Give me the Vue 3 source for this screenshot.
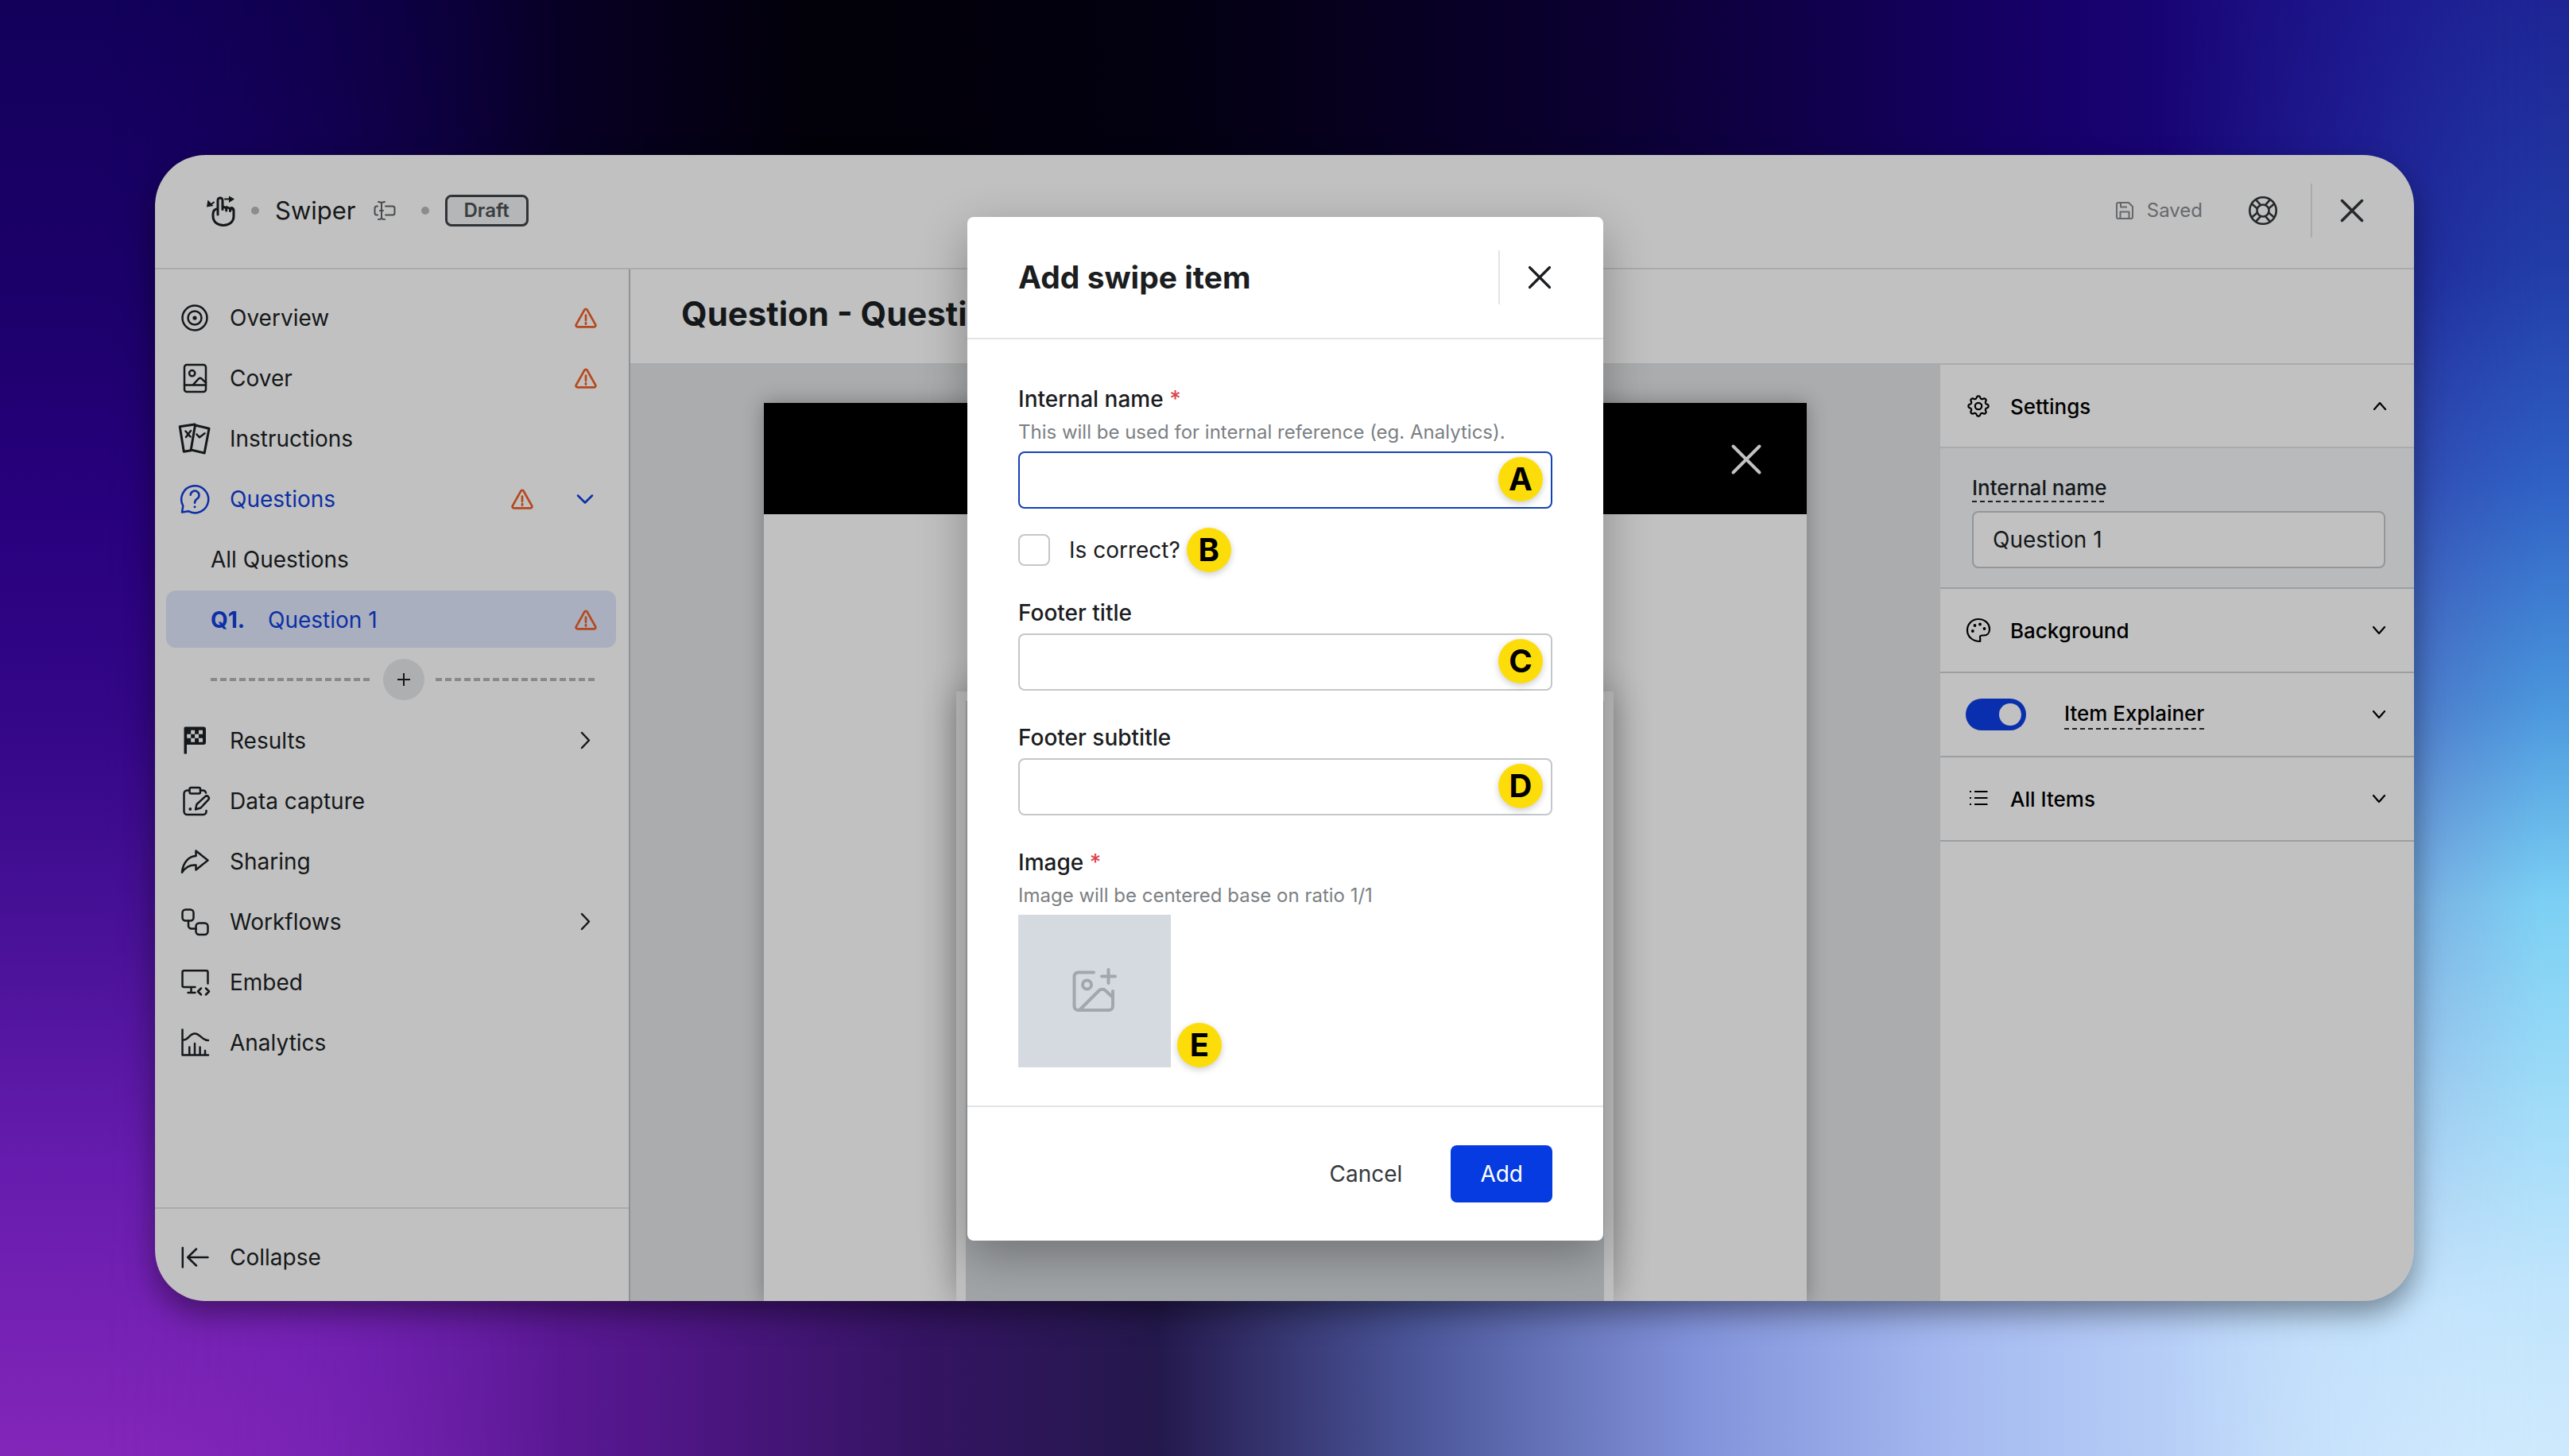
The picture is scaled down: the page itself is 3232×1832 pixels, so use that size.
<script setup>
import { ref } from 'vue'

const mainNav = [
  { id: 'overview', label: 'Overview', warn: true },
  { id: 'cover', label: 'Cover', warn: true },
  { id: 'instructions', label: 'Instructions' },
  { id: 'questions', label: 'Questions', warn: true, chevron: 'down', active: true }
]
const moreNav = [
  { id: 'results', label: 'Results', chevron: 'right' },
  { id: 'data', label: 'Data capture' },
  { id: 'sharing', label: 'Sharing' },
  { id: 'workflows', label: 'Workflows', chevron: 'right' },
  { id: 'embed', label: 'Embed' },
  { id: 'analytics', label: 'Analytics' }
]

const icons = {
  overview: '<circle cx="20" cy="20" r="15.5"/><circle cx="20" cy="20" r="8.5"/><circle cx="20" cy="20" r="2.6" fill="currentColor" stroke="none"/>',
  cover: '<rect x="7" y="3" width="27" height="34" rx="3"/><path d="M7 28.5h27M18 28l6.600-7.200a3 3 0 0 1 4.400 0l5 4.700"/><circle cx="16.700" cy="13.700" r="3.600"/>',
  instructions: '<path stroke-width="3" d="M20.500 3 38 7.200 32.200 38 15.200 34Z"/><path stroke-width="3" d="M20 1.900 1.200 4.800 6.300 36.200l9-1.400"/><path d="m8.500 10.500 6 7m.5-7.500-6 8M22.500 14.500l3.500 3.800 6.500-5"/>',
  questions: '<path d="M4 36.500 5.300 28.500A17 17 0 1 1 12 35.200Z"/><path d="M14.700 14.800a5.400 5.400 0 1 1 8.400 4.700c-2.100 1.400-3.100 2.600-3.100 5.200"/><circle cx="20" cy="29.700" r="1.500" fill="currentColor" stroke="none"/>',
  results: '<path fill="currentColor" stroke="none" fill-rule="evenodd" d="M6.500 4a1.500 1.500 0 0 1 1.500-1.500h23a3 3 0 0 1 3 3V22a3 3 0 0 1-3 3H10v11.500H6.500ZM15.200 6.700h4.900v5h-4.900ZM25 6.700h5v5h-5ZM10.200 11.700h5v5h-5ZM20.100 11.700H25v5h-4.900ZM15.200 16.700h4.900v5h-4.900ZM25 16.700h5v5h-5Z"/>',
  data: '<path d="M13 6.500H10.500a4 4 0 0 0-4 4V33a4 4 0 0 0 4 4H31a3.500 3.500 0 0 0 3.500-3.500V32M27 6.500h3a4 4 0 0 1 4 3"/><rect x="13.500" y="3" width="13.500" height="7.500" rx="2"/><path d="M21 30.500l1.500-6.500L33 14.300a2.800 2.800 0 0 1 4 4L27.500 28.500Z"/><circle cx="14.300" cy="30" r="1.900" fill="currentColor" stroke="none"/>',
  sharing: '<path d="M21.500 6.500 36.500 18.500 21.500 30.500V24.500C13 23.800 8 27.500 4 33.700 5 22 12 13.500 21.500 13Z"/>',
  workflows: '<rect x="4.500" y="4.500" width="14" height="14" rx="4"/><rect x="21.500" y="21.500" width="15" height="14.500" rx="4"/><path d="M12 18.500v6a4 4 0 0 0 4 4h5.500"/>',
  embed: '<path d="M20.500 26H6.500a2 2 0 0 1-2-2V7.300a2 2 0 0 1 2-2h28a2 2 0 0 1 2 2v14.200M15.500 26v6.500M11.500 33h9M28 27.500l-4 4 4 4M34 27.500l4 4-4 4"/>',
  analytics: '<path d="M4.500 3.500V35.500H37M4.500 16.500C12 17.500 13 8.500 20 8.500s8.500 8.500 17 8.500M13.300 35V25.500M20 35V21M26.600 35V25.500M33 35v-5"/>'
}

const gearPath = (() => {
  let d = ''
  for (let i = 0; i <= 128; i++) {
    const a = (i / 128) * Math.PI * 2
    const r = 11.200 + 1.500 * Math.tanh(1.600 * Math.cos(8 * a))
    d += `${i ? 'L' : 'M'}${(16 + r * Math.sin(a)).toFixed(2)} ${(16 - r * Math.cos(a)).toFixed(2)}`
  }
  return d + 'Z'
})()

const questionName = ref('Question 1')
const explainer = ref(true)
const itemName = ref('')
const isCorrect = ref(false)
const footerTitle = ref('')
const footerSubtitle = ref('')
</script>

<template>
  <div class="stage">
    <div class="glow top"></div>
    <div class="glow left"></div>
    <div class="glow right"></div>
    <div class="window">
      <header class="topbar">
        <svg class="logo" viewBox="0 0 36 40" fill="none" stroke="currentColor" stroke-width="3" stroke-linecap="round" stroke-linejoin="round">
          <path d="M14 25V7a3 3 0 0 1 6 0v11.500M14 17.500c-4 .5-6 3-6 7V27c0 7 5.500 11.500 13 11.500S34 34 34 27v-7.500c0-1.800-1.500-3-3-3M20 14.500l4.700 2.500v3M25 15.500l4.500 2v3M29.500 17l4 1.500" />
          <path stroke-width="2" d="M23 5.500h6M9 9.500 5 12.500" />
          <path fill="currentColor" stroke="none" d="M28 1.500 35 5.500l-7 4.500ZM1.500 6.500 8.500 14 0 15.500Z" />
        </svg>
        <span class="dot"></span>
        <span class="project">Swiper</span>
        <button class="icon-btn rename" aria-label="Rename">
          <svg viewBox="0 0 28 24" width="28" height="24" fill="none" stroke="currentColor" stroke-width="2" stroke-linecap="round" stroke-linejoin="round">
            <path d="M6 1c2.500 0 4 1 4 2.500v17c0 1.500-1.500 2.500-4 2.500M14 1c-2.500 0-4 1-4 2.500M14 23c-2.500 0-4-1-4-2.500M5 6.500H4a2.500 2.500 0 0 0-2.500 2.500v6A2.500 2.500 0 0 0 4 17.500h1M15 6.500h9A2.500 2.500 0 0 1 26.500 9v6a2.500 2.500 0 0 1-2.500 2.500h-9M8 12h4" />
          </svg>
        </button>
        <span class="dot"></span>
        <span class="draft">Draft</span>
        <div class="top-actions">
          <span class="saved">
            <svg viewBox="0 0 24 24" width="24" height="24" fill="none" stroke="currentColor" stroke-width="2" stroke-linejoin="round">
              <path d="M2 4a2 2 0 0 1 2-2h13l5 5v13a2 2 0 0 1-2 2H4a2 2 0 0 1-2-2ZM6.500 22v-8.500h11V22M7 2v5.500h8" />
            </svg>
            Saved
          </span>
          <button class="icon-btn" aria-label="Help">
            <svg viewBox="0 0 40 40" width="40" height="40" fill="none" stroke="currentColor" stroke-width="2.600">
              <circle cx="20" cy="20" r="16.700" /><circle cx="20" cy="20" r="7.500" />
              <path d="M12.800 17.200 5.800 11.500M17 12.900 11 6.200M27.200 17.200l7-5.700M23 12.900l6-6.700M12.800 22.800l-7 5.700M17 27.100l-6 6.700M27.200 22.800l7 5.700M23 27.100l6 6.700" />
            </svg>
          </button>
          <span class="divider"></span>
          <button class="icon-btn" aria-label="Close editor">
            <svg viewBox="0 0 32 32" width="32" height="32" fill="none" stroke="currentColor" stroke-width="3.500" stroke-linecap="round"><path d="M3.500 3.500l25 25M28.500 3.500l-25 25" /></svg>
          </button>
        </div>
      </header>

      <div class="columns">
        <nav class="sidebar">
          <div class="nav-list">
            <a v-for="n in mainNav" :key="n.id" href="#" class="nav-item" :class="{ active: n.active }">
              <svg class="nav-icon" viewBox="0 0 40 40" v-html="icons[n.id]"></svg>
              <span class="nav-label">{{ n.label }}</span>
              <svg v-if="n.warn" class="warn" viewBox="0 0 28 28"><path d="M12.300 3.800a2 2 0 0 1 3.400 0l10.400 18.600a2 2 0 0 1-1.700 3H3.600a2 2 0 0 1-1.700-3ZM14 10.500v6.500M14 20v1.800" /></svg>
              <svg v-if="n.chevron" class="chev" viewBox="0 0 28 28"><path d="m4 9.500 9 9 9-9" /></svg>
            </a>
            <a href="#" class="nav-item sub">All Questions</a>
            <a href="#" class="nav-item sub selected">
              <b class="number">Q1.</b>
              <span class="nav-label">Question 1</span>
              <svg class="warn" viewBox="0 0 28 28"><path d="M12.300 3.800a2 2 0 0 1 3.400 0l10.400 18.600a2 2 0 0 1-1.700 3H3.600a2 2 0 0 1-1.700-3ZM14 10.500v6.500M14 20v1.800" /></svg>
            </a>
            <div class="add-row">
              <span class="dashes"></span>
              <button class="add-question" aria-label="Add question">
                <svg viewBox="0 0 20 20" width="20" height="20" fill="none" stroke="currentColor" stroke-width="2"><path d="M10 2v16M2 10h16" /></svg>
              </button>
              <span class="dashes"></span>
            </div>
            <a v-for="n in moreNav" :key="n.id" href="#" class="nav-item">
              <svg class="nav-icon" viewBox="0 0 40 40" v-html="icons[n.id]"></svg>
              <span class="nav-label">{{ n.label }}</span>
              <svg v-if="n.chevron" class="chev" viewBox="0 0 28 28"><path d="m9 4 9 9.500L9 23" /></svg>
            </a>
          </div>
          <div class="nav-footer">
            <button class="nav-item">
              <svg class="nav-icon" viewBox="0 0 40 40"><path d="M4.800 8v24.500M36.500 20H11.500M22 9.500 11.200 20 22 30.500" /></svg>
              <span class="nav-label">Collapse</span>
            </button>
          </div>
        </nav>

        <main class="main">
          <h1 class="page-title">Question - Question 1</h1>
          <div class="work">
            <section class="canvas">
              <div class="preview">
                <div class="preview-bar">
                  <svg viewBox="0 0 40 40" width="40" height="40" fill="none" stroke="currentColor" stroke-width="4" stroke-linecap="round"><path d="M3.500 3.500l33 33M36.500 3.500l-33 33" /></svg>
                </div>
                <div class="card"><div class="card-image"></div></div>
              </div>
            </section>

            <aside class="panel">
              <button class="acc-head first">
                <svg class="acc-icon" viewBox="0 0 32 32"><path :d="gearPath" /><circle cx="16" cy="16" r="4.200" /></svg>
                <span class="acc-label">Settings</span>
                <svg class="acc-chev" viewBox="0 0 20 20"><path d="m4 14 7-8 7 8" /></svg>
              </button>
              <div class="acc-body">
                <label for="question-name" class="dashed">Internal name</label>
                <input id="question-name" v-model="questionName" class="field" type="text" />
              </div>
              <button class="acc-head">
                <svg class="acc-icon" viewBox="0 0 32 32">
                  <path d="M18.200 30c-9.700 0-16.200-6-16.200-14A13.900 13.900 0 0 1 16 2c8 0 14 5.500 14 12.700 0 5-3.200 7.800-7 7.800h-2.500c-2.500 0-3 1.500-2.300 3.500Z" />
                  <g fill="currentColor" stroke="none"><circle cx="8.800" cy="17" r="1.900" /><circle cx="11.500" cy="10" r="1.900" /><circle cx="18" cy="8.500" r="1.900" /><circle cx="23.500" cy="14" r="1.900" /></g>
                </svg>
                <span class="acc-label">Background</span>
                <svg class="acc-chev" viewBox="0 0 20 20"><path d="m3 6 7 8 7-8" /></svg>
              </button>
              <div class="acc-head">
                <input id="explainer" v-model="explainer" class="toggle" type="checkbox" role="switch" />
                <label for="explainer" class="dashed explainer">Item Explainer</label>
                <svg class="acc-chev" viewBox="0 0 20 20"><path d="m3 6 7 8 7-8" /></svg>
              </div>
              <button class="acc-head">
                <svg class="acc-icon" viewBox="0 0 32 32"><path d="M11 7h16.500M11 15h16.500M11 23h16.500M5 7h2M5 15h2M5 23h2" /></svg>
                <span class="acc-label">All Items</span>
                <svg class="acc-chev" viewBox="0 0 20 20"><path d="m3 6 7 8 7-8" /></svg>
              </button>
            </aside>
          </div>
        </main>
      </div>

      <div class="overlay">
        <form class="modal" role="dialog" aria-labelledby="modal-title" @submit.prevent>
          <div class="modal-head">
            <h2 id="modal-title">Add swipe item</h2>
            <span class="divider light"></span>
            <button type="button" class="icon-btn" aria-label="Close dialog">
              <svg viewBox="0 0 32 32" width="32" height="32" fill="none" stroke="currentColor" stroke-width="3.200" stroke-linecap="round"><path d="M3.500 3.500l25 25M28.500 3.500l-25 25" /></svg>
            </button>
          </div>
          <div class="modal-body">
            <div class="group">
              <label for="item-name">Internal name <span class="req">*</span></label>
              <p class="hint">This will be used for internal reference (eg. Analytics).</p>
              <div class="control">
                <input id="item-name" v-model="itemName" class="field focus" type="text" />
                <span class="badge">A</span>
              </div>
            </div>
            <div class="check-row">
              <input id="is-correct" v-model="isCorrect" type="checkbox" class="check" />
              <label for="is-correct">Is correct?</label>
              <span class="badge inline">B</span>
            </div>
            <div class="group">
              <label for="footer-title">Footer title</label>
              <div class="control">
                <input id="footer-title" v-model="footerTitle" class="field" type="text" />
                <span class="badge">C</span>
              </div>
            </div>
            <div class="group">
              <label for="footer-subtitle">Footer subtitle</label>
              <div class="control">
                <input id="footer-subtitle" v-model="footerSubtitle" class="field" type="text" />
                <span class="badge">D</span>
              </div>
            </div>
            <div class="group">
              <span class="legend">Image <span class="req">*</span></span>
              <p class="hint">Image will be centered base on ratio 1/1</p>
              <div class="image-row">
                <button type="button" class="image-picker" aria-label="Choose image">
                  <svg viewBox="0 0 60 60" width="60" height="60" fill="none" stroke="currentColor" stroke-width="4" stroke-linecap="round" stroke-linejoin="round">
                    <path d="M29 6.500H9.500a5 5 0 0 0-5 5V49a5 5 0 0 0 5 5H48a5 5 0 0 0 5-5V30M12 53 35.500 29.500a6 6 0 0 1 8.500 0L53 38M47.500 3v17M39 11.500h17" />
                    <circle cx="20.500" cy="22" r="5.500" />
                  </svg>
                </button>
                <span class="badge inline">E</span>
              </div>
            </div>
          </div>
          <div class="modal-foot">
            <button type="button" class="btn">Cancel</button>
            <button type="submit" class="btn primary">Add</button>
          </div>
        </form>
      </div>
    </div>
  </div>
</template>

<style>
body { margin: 0; }
</style>

<style scoped>
* { box-sizing: border-box; }

.stage {
  position: relative;
  display: flex;
  min-height: 100vh;
  padding: 195px;
  font-family: Inter, "Liberation Sans", sans-serif;
  font-size: 28px;
  line-height: 36px;
  color: #15181a;
  background: linear-gradient(90deg, #8226b8 0%, #6f20b0 12%, #521689 25%, #341462 36%, #24184c 45%, #4a5598 55%, #8292da 66%, #a5b9f0 76%, #c2dcfb 90%, #cfe9fd 100%);
}
.glow { position: absolute; inset: 0; }
.top {
  background: linear-gradient(90deg, #14005c 0%, #0c0038 15%, #020008 32%, #030010 45%, #0b0030 62%, #16006a 80%, #1d0c86 92%, #1f2898 100%);
  mask-image: linear-gradient(180deg, #000 0%, #000 20%, rgba(0, 0, 0, 0.7) 50%, transparent 90%);
}
.left {
  background: linear-gradient(180deg, #12005a 0%, #1c006a 20%, #28007e 35%, #340788 50%, #4a1298 65%, #661cae 80%, #8226b8 100%);
  mask-image: linear-gradient(90deg, #000 0%, #000 4%, transparent 22%);
}
.right {
  background: linear-gradient(180deg, #1e2494 0%, #223ca6 18%, #2f60c4 33%, #4a95dc 48%, #7cd0f4 62%, #a0dcf8 76%, #bfe4fc 88%, #cfe9fd 100%);
  mask-image: linear-gradient(90deg, transparent 84%, rgba(0, 0, 0, 0.6) 94%, #000 99%);
}

.window {
  position: relative;
  flex: 1;
  display: flex;
  flex-direction: column;
  overflow: hidden;
  background: #c1c1c1;
  border-radius: 64px;
}
.stage::after {
  content: "";
  position: absolute;
  inset: 195px;
  border-radius: 64px;
  box-shadow: 0 16px 36px rgba(0, 0, 0, 0.4);
  pointer-events: none;
}

button, input { font: inherit; color: inherit; }
button { background: none; border: 0; padding: 0; }
a { color: inherit; text-decoration: none; }
h1, h2, p { margin: 0; }
svg { display: block; flex: none; }

/* top bar */
.topbar {
  display: flex;
  align-items: center;
  height: 144px;
  padding: 0 62px 2px 65px;
  border-bottom: 2px solid #a9abac;
}
.logo { width: 36px; height: 40px; }
.dot { width: 10px; height: 10px; margin: 0 20px; border-radius: 50%; background: #8b8c8d; }
.project { font-size: 31px; line-height: 40px; }
.rename { margin: 0 12px 0 22px; color: #484c4f; }
.draft {
  height: 40px;
  padding: 0 21px;
  border: 3px solid #313436;
  border-radius: 8px;
  background: #b4b6b7;
  color: #3a3d40;
  font-size: 24px;
  font-weight: 600;
  line-height: 34px;
}
.top-actions { display: flex; align-items: center; margin-left: auto; color: #25292c; }
.saved { display: flex; align-items: center; gap: 16px; margin-right: 56px; font-size: 24px; color: #66696c; }
.icon-btn { display: flex; }
.divider { width: 2px; height: 68px; margin: 0 34px 0 40px; background: #a9abac; }
.divider.light { background: #e2e4e6; margin: 0 34px 0 auto; }

.columns { flex: 1; display: flex; }

/* sidebar */
.sidebar {
  display: flex;
  flex-direction: column;
  flex: 0 0 598px;
  border-right: 2px solid #8f9294;
}
.nav-list { display: flex; flex-direction: column; gap: 4px; flex: 1; padding: 24px 16px 24px 14px; }
.nav-item {
  display: flex;
  align-items: center;
  width: 100%;
  height: 72px;
  padding: 2px 24px 0 16px;
  border-radius: 12px;
  text-align: left;
}
.nav-icon { width: 40px; height: 40px; margin-right: 24px; fill: none; stroke: currentColor; stroke-width: 2.500px; stroke-linecap: round; stroke-linejoin: round; overflow: visible; }
.nav-label { flex: 1; }
.active, .selected { color: #0c2fa6; }
.selected { background: #a9afbf; }
.sub { padding-left: 56px; }
.number { flex: 0 0 72px; font-weight: 700; }
.warn, .chev { width: 28px; height: 28px; fill: none; stroke: currentColor; stroke-width: 2.500px; stroke-linecap: round; stroke-linejoin: round; }
.warn { color: #b5481c; stroke-width: 2.700px; }
.warn + .chev { margin-left: 52px; }
.add-row { display: flex; align-items: center; gap: 14px; height: 72px; padding: 0 24px 0 56px; }
.dashes { flex: 1; height: 4px; background: repeating-linear-gradient(90deg, #87898b 0 8px, transparent 8px 12px); }
.add-question { display: grid; place-items: center; width: 52px; height: 52px; border-radius: 50%; background: #adafb1; }
.nav-footer { padding: 24px 16px 20px 14px; border-top: 2px solid #a9abac; }

/* main area */
.main { flex: 1; display: flex; flex-direction: column; min-width: 0; }
.page-title {
  height: 120px;
  padding: 28px 64px 0;
  border-bottom: 2px solid #a9abac;
  font-size: 42px;
  font-weight: 700;
  line-height: 56px;
}
.work { flex: 1; display: flex; }
.canvas { flex: 1; display: flex; justify-content: center; padding: 48px 168px 0; background: #abacae; }
.preview { flex: 1; display: flex; flex-direction: column; background: #c1c1c1; box-shadow: 0 0 24px rgba(0, 0, 0, 0.3); }
.preview-bar { display: flex; justify-content: flex-end; align-items: center; height: 140px; padding: 2px 56px 0; background: #000; color: #c2c2c2; }
.card { flex: 1; display: flex; margin: 223px 243px 0 242px; padding: 12px 12px 0; background: #c0c0c0; box-shadow: 0 0 40px rgba(0, 0, 0, 0.3); }
.card-image { flex: 1; background: #a2a5a8; }

/* right panel */
.panel { flex: 0 0 596px; }
.acc-head {
  display: flex;
  align-items: center;
  width: 100%;
  height: 106px;
  padding: 0 34px 0 32px;
  border-bottom: 2px solid #9c9ea0;
  color: #000;
  font-size: 26px;
  font-weight: 500;
  text-align: left;
}
.first { height: 105px; border-color: #a9abac; }
.acc-icon { width: 32px; height: 32px; margin-right: 24px; fill: none; stroke: currentColor; stroke-width: 2.200px; stroke-linejoin: round; }
.acc-label { flex: 1; padding-top: 2px; }
.acc-chev { width: 20px; height: 20px; fill: none; stroke: currentColor; stroke-width: 2.200px; stroke-linecap: round; stroke-linejoin: round; }
.acc-body { padding: 34px 36px 24px 40px; background: #b8babc; border-bottom: 2px solid #9c9ea0; font-size: 26px; }
.dashed {
  display: block;
  width: max-content;
  padding-bottom: 2px;
  font-weight: 500;
  background: repeating-linear-gradient(90deg, #1f2224 0 6px, transparent 6px 10px) left bottom / 100% 2px no-repeat;
}
.acc-body .dashed { line-height: 32px; margin-bottom: 11px; }
.explainer { margin: 0 auto 0 48px; }
.field {
  display: block;
  width: 100%;
  height: 72px;
  padding: 0 24px;
  border: 2px solid #c3c7ca;
  border-radius: 8px;
  background: #fff;
  font-size: 28px;
  outline: none;
}
.acc-body .field { background: #c1c1c1; border-color: #93979a; }
.toggle {
  appearance: none;
  display: flex;
  justify-content: flex-end;
  width: 76px;
  height: 40px;
  margin: 0;
  padding: 6px;
  border-radius: 20px;
  background: #0a2fae;
}
.toggle::before { content: ""; width: 28px; height: 28px; border-radius: 50%; background: #c1c1c1; }
.toggle:not(:checked) { justify-content: flex-start; background: #85888b; }

/* dialog */
.overlay { position: absolute; inset: 0; display: grid; place-items: center; padding: 2px 0 0 2px; }
.modal {
  width: 800px;
  background: #fff;
  border-radius: 8px;
  box-shadow: 0 20px 60px rgba(0, 0, 0, 0.3);
  color: #1b1d1f;
}
.modal-head { display: flex; align-items: center; height: 154px; padding: 0 64px; border-bottom: 2px solid #e2e4e6; }
.modal-head h2 { font-size: 39px; line-height: 48px; font-weight: 700; }
.modal-body { display: flex; flex-direction: column; gap: 41px; padding: 57px 64px 48px; }
.group { display: flex; flex-direction: column; gap: 8px; }
.group label, .legend { font-weight: 500; }
.req { color: #e0434b; }
.hint { font-size: 24px; line-height: 32px; color: #7b7f83; }
.control { position: relative; }
.focus { border-color: #1442b4; }
.badge {
  position: absolute;
  top: 7px;
  right: 12px;
  width: 56px;
  height: 56px;
  border-radius: 50%;
  background: #fddd09;
  color: #000;
  font-size: 40px;
  font-weight: 700;
  line-height: 56px;
  text-align: center;
  box-shadow: 0 3px 8px rgba(0, 0, 0, 0.2);
}
.badge.inline { position: static; flex: none; margin: -8px 8px; }
.check-row { display: flex; align-items: center; height: 40px; margin-top: -9px; }
.check { appearance: none; width: 40px; height: 40px; margin: 0 24px 0 0; border: 2px solid #c3c7ca; border-radius: 8px; background: #fff; }
.check:checked { background: #053be0; }
.image-row { display: flex; align-items: flex-end; }
.image-row .badge { margin: 0 8px; }
.image-picker { display: grid; place-items: center; width: 192px; height: 192px; background: #d5dae1; color: #a1a7ad; }
.modal-foot { display: flex; justify-content: flex-end; align-items: center; gap: 24px; height: 170px; padding: 0 64px; border-top: 2px solid #e2e4e6; }
.btn { height: 72px; padding: 0 37px; border-radius: 8px; color: #36393c; }
.primary { background: #053be0; color: #fff; }
</style>
